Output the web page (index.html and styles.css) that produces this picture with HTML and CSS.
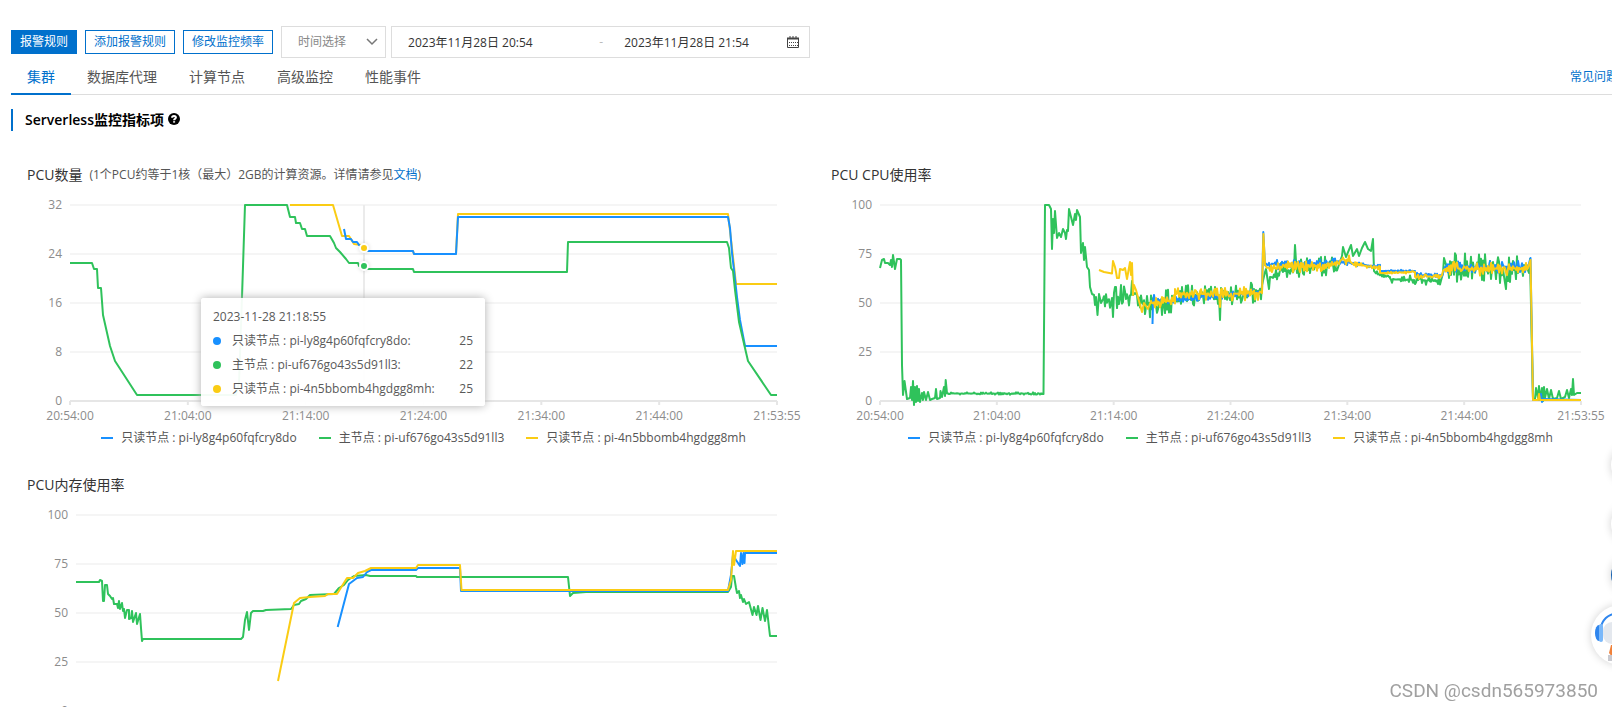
FILE: index.html
```html
<!DOCTYPE html>
<html lang="zh-CN">
<head>
<meta charset="utf-8">
<title>性能监控</title>
<link rel="stylesheet" href="styles.css">
</head>
<body>
<div class="page">
  <div class="toolbar">
    <button class="btn btn-primary" type="button">报警规则</button>
    <button class="btn" type="button">添加报警规则</button>
    <button class="btn" type="button">修改监控频率</button>
    <div class="select-wrap">
      <select class="select" aria-label="时间选择"><option>时间选择</option></select>
      <svg class="chevron" viewBox="0 0 12 8" aria-hidden="true"><path d="M1 1l5 5 5-5" /></svg>
    </div>
    <div class="range">
      <input class="range-input range-start" type="text" aria-label="开始时间" value="2023年11月28日 20:54">
      <span class="range-sep">-</span>
      <input class="range-input" type="text" aria-label="结束时间" value="2023年11月28日 21:54">
      <svg class="calendar" viewBox="0 0 14 14" aria-hidden="true">
        <path d="M1.500 3.500h11v9h-11z" />
        <path class="cal-head" d="M1 3.500h12" />
        <path d="M4 1v3M7 1v3M10 1v3" />
        <path class="cal-dots" d="M3 7.500h9M3 10.500h9" />
      </svg>
    </div>
  </div>

  <nav class="tabs">
    <a class="tab tab-active" href="#cluster">集群</a>
    <a class="tab" href="#proxy">数据库代理</a>
    <a class="tab" href="#node">计算节点</a>
    <a class="tab" href="#advanced">高级监控</a>
    <a class="tab" href="#events">性能事件</a>
    <a class="faq" href="#faq">常见问题</a>
  </nav>

  <h2 class="section-title">Serverless监控指标项
    <svg class="help" viewBox="0 0 12 12" aria-hidden="true">
      <circle cx="6" cy="6" r="6" />
      <path d="M4.1 4.7C4.1 3.5 4.9 2.9 6 2.9s1.9.7 1.9 1.6C7.900 5.700 6.100 5.700 6.100 7.200" />
      <path d="M6.100 8.200v1.400" />
    </svg>
  </h2>

  <main class="charts">
    <section class="card">
      <h3 class="card-title">PCU数量 <small class="note">(1个PCU约等于1核（最大）2GB的计算资源。详情请参见<a href="#doc">文档</a>)</small></h3>
      <div class="chart chart-narrow">
        <div class="y-axis"><span>32</span><span>24</span><span>16</span><span>8</span><span>0</span></div>
        <div class="plot">
          <svg class="canvas" id="pcu" viewBox="0 0 707 196" preserveAspectRatio="none"></svg>
          <span class="marker marker-yellow"></span>
          <span class="marker marker-green"></span>
          <div class="tooltip">
            <div class="tip-time">2023-11-28 21:18:55</div>
            <div class="tip-row"><i class="dot blue"></i><span>只读节点 : pi-ly8g4p60fqfcry8do:</span><b>25</b></div>
            <div class="tip-row"><i class="dot green"></i><span>主节点 : pi-uf676go43s5d91ll3:</span><b>22</b></div>
            <div class="tip-row"><i class="dot yellow"></i><span>只读节点 : pi-4n5bbomb4hgdgg8mh:</span><b>25</b></div>
          </div>
        </div>
        <div class="x-axis"><span>20:54:00</span><span>21:04:00</span><span>21:14:00</span><span>21:24:00</span><span>21:34:00</span><span>21:44:00</span><span>21:53:55</span></div>
        <div class="legend">
          <span class="key"><i class="dash blue"></i>只读节点 : pi-ly8g4p60fqfcry8do</span>
          <span class="key"><i class="dash green"></i>主节点 : pi-uf676go43s5d91ll3</span>
          <span class="key"><i class="dash yellow"></i>只读节点 : pi-4n5bbomb4hgdgg8mh</span>
        </div>
      </div>
    </section>

    <section class="card">
      <h3 class="card-title">PCU CPU使用率</h3>
      <div class="chart">
        <div class="y-axis"><span>100</span><span>75</span><span>50</span><span>25</span><span>0</span></div>
        <div class="plot">
          <svg class="canvas" id="cpu" viewBox="0 0 701 196" preserveAspectRatio="none"></svg>
        </div>
        <div class="x-axis"><span>20:54:00</span><span>21:04:00</span><span>21:14:00</span><span>21:24:00</span><span>21:34:00</span><span>21:44:00</span><span>21:53:55</span></div>
        <div class="legend">
          <span class="key"><i class="dash blue"></i>只读节点 : pi-ly8g4p60fqfcry8do</span>
          <span class="key"><i class="dash green"></i>主节点 : pi-uf676go43s5d91ll3</span>
          <span class="key"><i class="dash yellow"></i>只读节点 : pi-4n5bbomb4hgdgg8mh</span>
        </div>
      </div>
    </section>

    <section class="card">
      <h3 class="card-title">PCU内存使用率</h3>
      <div class="chart">
        <div class="y-axis"><span>100</span><span>75</span><span>50</span><span>25</span><span>0</span></div>
        <div class="plot">
          <svg class="canvas" id="mem" viewBox="0 0 701 196" preserveAspectRatio="none"></svg>
        </div>
      </div>
    </section>
  </main>
</div>

<button class="float float-a" type="button" aria-label="工具"></button>
<button class="float float-b" type="button" aria-label="反馈"></button>
<button class="float float-c" type="button" aria-label="咨询"></button>
<button class="robot" type="button" aria-label="智能客服">
  <svg viewBox="0 0 60 60" aria-hidden="true">
    <path d="M10 21C13 12 20 8 30 8s17 4 20 13" fill="none" stroke="#2f86ee" stroke-width="2" />
    <rect x="12" y="17" width="36" height="22" rx="9" fill="#e4e8ee" />
    <ellipse cx="8" cy="28" rx="4" ry="8" fill="#2f86ee" />
    <rect x="8" y="19" width="4" height="18" rx="2" fill="#7ab8fa" />
    <path d="M20 40l-2 8 4 5h18l4-5-2-8z" fill="#f0813a" />
    <path d="M17 50h5v6h-5z" fill="#c9c9cf" />
  </svg>
</button>
<div class="watermark">CSDN @csdn565973850</div>
<script src="charts.js"></script>
</body>
</html>
```

FILE: styles.css
```css
* { box-sizing: border-box; }

body {
  margin: 0;
  height: 100vh;
  overflow: hidden;
  background: #fff;
  color: #333;
  font-family: "Open Sans", "Noto Sans CJK SC", sans-serif;
  font-size: 12px;
}

a { color: #0070cc; text-decoration: none; }

button, input, select { font: inherit; }

.page { padding-top: 26px; }

.toolbar {
  display: flex;
  align-items: center;
  gap: 8px;
  height: 31px;
  padding-left: 11px;
}

.btn {
  height: 24px;
  padding: 0 8px;
  border: 1px solid #0070cc;
  border-radius: 0;
  background: #fff;
  color: #0070cc;
  line-height: 20px;
}

.btn-primary { background: #0070cc; color: #fff; }

.select-wrap { position: relative; }

.select {
  display: block;
  width: 105px;
  height: 32px;
  padding: 0 16px;
  border: 1px solid #ddd;
  border-radius: 0;
  background: #fff;
  color: #888;
  appearance: none;
}

.chevron {
  position: absolute;
  top: 12px;
  right: 8px;
  width: 12px;
  height: 8px;
  fill: none;
  stroke: #777;
  stroke-width: 1.5;
}

.range {
  display: flex;
  align-items: center;
  width: 419px;
  height: 32px;
  margin-left: -3px;
  padding: 0 9px 0 16px;
  border: 1px solid #ddd;
}

.range-input {
  flex: 11;
  min-width: 0;
  padding: 0;
  border: 0;
  outline: 0;
  background: none;
  color: #333;
}

.range-start { flex: 13; }

.range-sep { width: 25px; color: #bbb; }

.calendar { width: 14px; height: 14px; fill: none; stroke: #444; }
.cal-head { stroke-width: 2; }
.cal-dots { stroke-dasharray: 1 1; }

.tabs {
  display: flex;
  height: 38px;
  margin: 0 -6px 0 11px;
  border-bottom: 1px solid #ddd;
  font-size: 14px;
  line-height: 40px;
}

.tab { height: 38px; padding: 0 16px; color: #555; }
.tab-active { border-bottom: 2px solid #0070cc; color: #0070cc; }
.faq { margin-left: auto; font-size: 12px; }

.section-title {
  display: flex;
  align-items: center;
  gap: 4px;
  height: 22px;
  margin: 14px 0 0 11px;
  padding: 0 0 2px 12px;
  border-left: 2px solid #0070cc;
  color: #000;
  font-size: 14px;
  font-weight: 600;
}

.help { width: 12px; height: 12px; fill: #000; }
.help path { fill: none; stroke: #fff; stroke-width: 2; }

.charts {
  display: grid;
  grid-template-columns: 1fr 1fr;
  gap: 28px 54px;
  padding: 33px 31px 0 27px;
}

.card { min-width: 0; }

.card-title {
  display: flex;
  align-items: center;
  gap: 7px;
  height: 20px;
  margin: 0 0 21px;
  font-size: 14px;
  font-weight: 400;
  white-space: nowrap;
}

.note { color: #555; font-size: 12px; }

.chart { display: grid; grid-template-columns: 49px 1fr; }
.chart-narrow { grid-template-columns: 43px 1fr; }

.y-axis {
  display: flex;
  flex-direction: column;
  justify-content: space-between;
  height: 196px;
  margin-top: -1px;
  padding-right: 8px;
  color: #8c8c8c;
  text-align: right;
}

.y-axis span { display: flex; align-items: center; justify-content: flex-end; height: 0; }

.plot { position: relative; height: 196px; }

.canvas { display: block; width: 100%; height: 196px; overflow: visible; }

.canvas path, .canvas line { fill: none; stroke-width: 2; vector-effect: non-scaling-stroke; }
.canvas .grid-line { stroke: #f5f5f5; }
.canvas .axis-line { stroke: #e6e6e6; }
.canvas .cross-line { stroke: #ebebeb; }
.series { stroke-linejoin: round; }
.series-blue { stroke: #1890ff; }
.series-green { stroke: #2fc25b; }
.series-yellow { stroke: #facc14; }

.x-axis {
  grid-column: 2;
  display: flex;
  justify-content: space-between;
  height: 16px;
  margin-top: 7px;
  color: #8c8c8c;
  line-height: 16px;
}

.x-axis span { display: flex; justify-content: center; width: 0; }

.legend {
  grid-column: 2;
  display: flex;
  justify-content: center;
  gap: 22px;
  height: 16px;
  margin-top: 6px;
  color: #555;
  line-height: 16px;
  white-space: nowrap;
}

.key { display: flex; align-items: center; gap: 8px; }
.dash { width: 12px; height: 2px; }
.blue { background: #1890ff; }
.green { background: #2fc25b; }
.yellow { background: #facc14; }

.marker {
  position: absolute;
  left: 41.6%;
  width: 10px;
  height: 10px;
  margin: -5px;
  border: 2px solid #fff;
  border-radius: 50%;
  box-shadow: 0 0 4px rgba(0, 0, 0, 0.15);
}

.marker-yellow { top: 43px; background: #facc14; }
.marker-green { top: 61px; background: #2fc25b; }

.tooltip {
  position: absolute;
  top: 93px;
  left: 131px;
  width: 284px;
  padding: 7px 12px 5px;
  border-radius: 3px;
  background: rgba(255, 255, 255, 0.95);
  box-shadow: 0 0 10px #aeaeae;
  color: #595959;
  line-height: 24px;
}

.tip-row { display: flex; align-items: center; }
.tip-row b { margin-left: auto; font-weight: 400; }
.dot { width: 8px; height: 8px; margin-right: 11px; border-radius: 50%; }

.float, .robot {
  position: fixed;
  padding: 0;
  border: 0;
  border-radius: 50%;
  background: #fff;
  box-shadow: 0 0 8px rgba(0, 0, 0, 0.18);
}

.float { right: -39px; width: 40px; height: 40px; }
.float-a { bottom: 222px; }
.float-b { bottom: 163px; }
.float-c { bottom: 112px; background: #1560b0; }

.robot { right: -39px; bottom: 42px; width: 60px; height: 60px; }
.robot svg { display: block; width: 60px; height: 60px; }

.watermark {
  position: fixed;
  right: 14px;
  bottom: 4px;
  color: #a0a0a0;
  font-family: Roboto, sans-serif;
  font-size: 19px;
  line-height: 24px;
}
```

FILE: charts.js
```js
const NS = 'http://www.w3.org/2000/svg';

// Deterministic noise so that a series looks the same on every load.
function randomSource(seed) {
  let s = seed;
  return () => (s = (s * 16807) % 2147483647) / 2147483647;
}

// A point is [x, y]; a jittery stretch is [x0, x1, y0, y1, amplitude].
function toPath(parts, seed) {
  const rand = randomSource(seed);
  const points = [];
  for (const p of parts) {
    if (p.length === 2) { points.push(p); continue; }
    const [x0, x1, y0, y1, amp] = p;
    let sign = 1;
    for (let x = x0; x <= x1; x += 1) {
      const base = y0 + (y1 - y0) * (x - x0) / (x1 - x0);
      const r = rand();
      sign = rand() < 0.75 ? -sign : sign;
      points.push([x, base + sign * amp * r * r * 1.2]);
    }
  }
  return 'M' + points.map(([x, y]) => x.toFixed(1) + ' ' + y.toFixed(1)).join('L');
}

function add(svg, tag, cls, attrs) {
  const el = document.createElementNS(NS, tag);
  el.setAttribute('class', cls);
  for (const k in attrs) el.setAttribute(k, attrs[k]);
  svg.appendChild(el);
}

function draw(id, width, series, cross) {
  const svg = document.getElementById(id);
  for (let i = 0; i < 4; i++) add(svg, 'line', 'grid-line', { x1: 0, x2: width, y1: i * 49, y2: i * 49 });
  add(svg, 'line', 'axis-line', { x1: 0, x2: width, y1: 196, y2: 196 });
  for (let i = 0; i <= 6; i++) {
    const x = i * width / 6;
    add(svg, 'line', 'axis-line', { x1: x, x2: x, y1: 196, y2: 200 });
  }
  if (cross) add(svg, 'line', 'cross-line', { x1: cross, x2: cross, y1: 0, y2: 196 });
  series.forEach(([color, parts], i) => add(svg, 'path', 'series series-' + color, { d: toPath(parts, 97 + i * 131) }));
}

draw('pcu', 707, [
  ['yellow', [[220,0],[263,0],[272,31],[279,31],[284,39],[291,40],[294,43],[298,46],[343,46],[344,49],[386,49],[388,9],[658,9],[662,43],[666,79],[707,79]]],
  ['blue', [[274,24],[276,34],[281,34],[283,37],[287,37],[289,40],[294,43],[298,46],[343,46],[344,49],[386,49],[388,12],[658,12],[660,23],[662,48],[664,65],[667,92],[670,115],[675,141],[707,141]]],
  ['green', [[0,58],[22,58],[24,64],[27,64],[28,83],[31,83],[33,110],[40,141],[45,156],[67,190],[166,190],[169,178],[172,92],[175,0],[217,0],[220,12],[225,12],[226,18],[230,18],[232,24],[235,24],[237,31],[260,31],[264,38],[266,43],[270,47],[276,54],[279,58],[288,58],[289,61],[294,61],[298,64],[343,64],[344,67],[497,67],[498,37],[657,37],[659,43],[661,63],[663,66],[665,85],[669,117],[675,143],[678,156],[701,190],[707,190]]]
], 294);

draw('cpu', 701, [
  ['green', [[0,63],[2,55],[4,54],[5,58],[8,58],[10,60],[11,55],[12,62],[13,50],[15,64],[17,54],[20,54],[21,55],[22,160],[23,190],[24.5,176],[27,194],[30,193],[31,182],[32,195],[33,176],[34,200],[35,182],[36,197],[37,181],[38,196],[39,184],[40,197],[42,188],[43,195],[44,187],[46,195],[48,187],[50,195],[52,194],[55,193],[56,184],[57,194],[60,193],[60.5,186],[62,192],[64,182],[65,191],[65.7,175],[67,188],[67,163,188.5,188.5,1],[163.5,189],[165,0],[169,0],[171,4],[172,44],[173,14],[174,28],[175,6],[177,33],[179,28],[181,32],[183,24],[185,28],[186,34],[187,25],[188,26],[189,4],[193,20],[195,9],[196,15],[197,5],[200,12],[201,48],[203,38],[204,55],[205,42],[207,62],[209,65],[210,82],[212,89],[214,90],[215,100],[216,92],[217.5,110],[219,89],[221,98],[222,232,95,94,8],[233,112],[234,251,93,90,10],[252,76],[253,90],[255,88],[257,265,90,102,8],[266,300,100,96,11],[300,339,91,91,9],[340,115],[341,382,92,87,9],[385,67],[386,64],[389,84],[390,72],[392,400,73,70,6],[400,414,67,64,8],[415,40],[416,457,62,59,9],[462,51],[463,42],[466,52],[471,40],[473,51],[477,44],[479,51],[482,43],[485,37],[488,44],[491,46],[493,34],[494,66],[495,510,68,72,3],[510,560,74,76,4],[563,68],[564,53],[566,624,62,64,12],[626,84],[627,648,64,64,11],[649,68],[650,54],[653,194],[655,194],[656,183],[658,193],[659,181],[660,194],[662,183],[663,196],[664,182],[665,193],[667,184],[669,194],[671,185],[673,194],[677,193],[679,186],[681,194],[685,192],[687,185],[689,193],[691,184],[692,190],[693,174],[694,190],[697,188],[701,188]]],
  ['blue', [[272.5,119],[273,97],[274,90],[275,382,96,87,3],[383.3,27],[385,60],[386,470,60,57,4],[470,500,58,62,2],[500,535,66,66,1],[535,562,70,71,2],[565,648,62,62,5],[650.5,53],[653,195],[660,195],[661,189],[662,197],[663,194],[701,195]]],
  ['yellow', [[219,65],[224,67],[232,68.5],[233,56],[235,62],[236,67],[237,73],[239,73],[240,64],[243,65],[245,63],[247,74],[250,57],[251,70],[252,58],[253,90],[254,80],[256,85],[262,107],[264,98],[268,104],[271,96],[272,295,98,95,5],[295,339,89,89,5],[340,102],[341,382,89,88,6],[383.4,29],[385,60],[387,63],[388,460,63,59,5],[460,470,55,55,4],[473,500,59,63,2],[500,535,68,67,1],[535,562,72,71,2],[563,66],[565,648,64,63,6],[650.5,55],[653,195],[658,195],[659,189],[660,195],[701,195]]]
]);

draw('mem', 701, [
  ['green', [[0,67],[23,67],[24,65],[26,66],[27,86],[28,86],[29,70],[31,70],[32,79],[34,81],[36,84],[37,83],[38,89],[41,89],[42,93],[43,86],[44,94],[46,88],[47,96],[48,94],[49,103],[51,95],[53,95],[53,104],[55,103],[56,96],[57,107],[60,98],[61,109],[64,99],[65,113],[66,126],[67,124],[165,124],[167,122],[169,105],[171,97],[173,115],[175,98],[177,96],[187,96],[190,95],[215,94],[218,90],[223,89],[225,86],[230,84],[234,80],[258,79],[263,73],[268,70],[272,65],[278,61],[290,60],[294,61],[340,61],[341,62],[492,62],[494,81],[497,78],[510,77],[652,77],[655,72],[656,61],[658,61],[660,73],[661,78],[663,76],[664,83],[665,80],[667,87],[668,84],[670,89],[673,87],[676.5,100],[678,92],[680.5,100],[682,91],[684.5,105],[686.5,93],[689,106],[691,95],[694,121],[701,121]]],
  ['blue', [[261.7,112],[273,69],[281,63],[287,62],[291,57],[295,55],[340,55],[342,53],[384,53],[385,76],[652,76],[655,60],[657,40],[660,45],[664,51],[665,38],[666.5,49],[667.5,38],[668.5,48],[669,38],[701,38]]],
  ['yellow', [[202,166],[218,88],[224,83],[234,82],[249,81],[252,79],[261,79],[271,63],[277,63],[282,58],[289,56],[295,53],[340,53],[342,50],[384,50],[385.5,75],[652,75],[655,65],[657,36],[658,50],[660,36],[701,36]]]
]);
```
